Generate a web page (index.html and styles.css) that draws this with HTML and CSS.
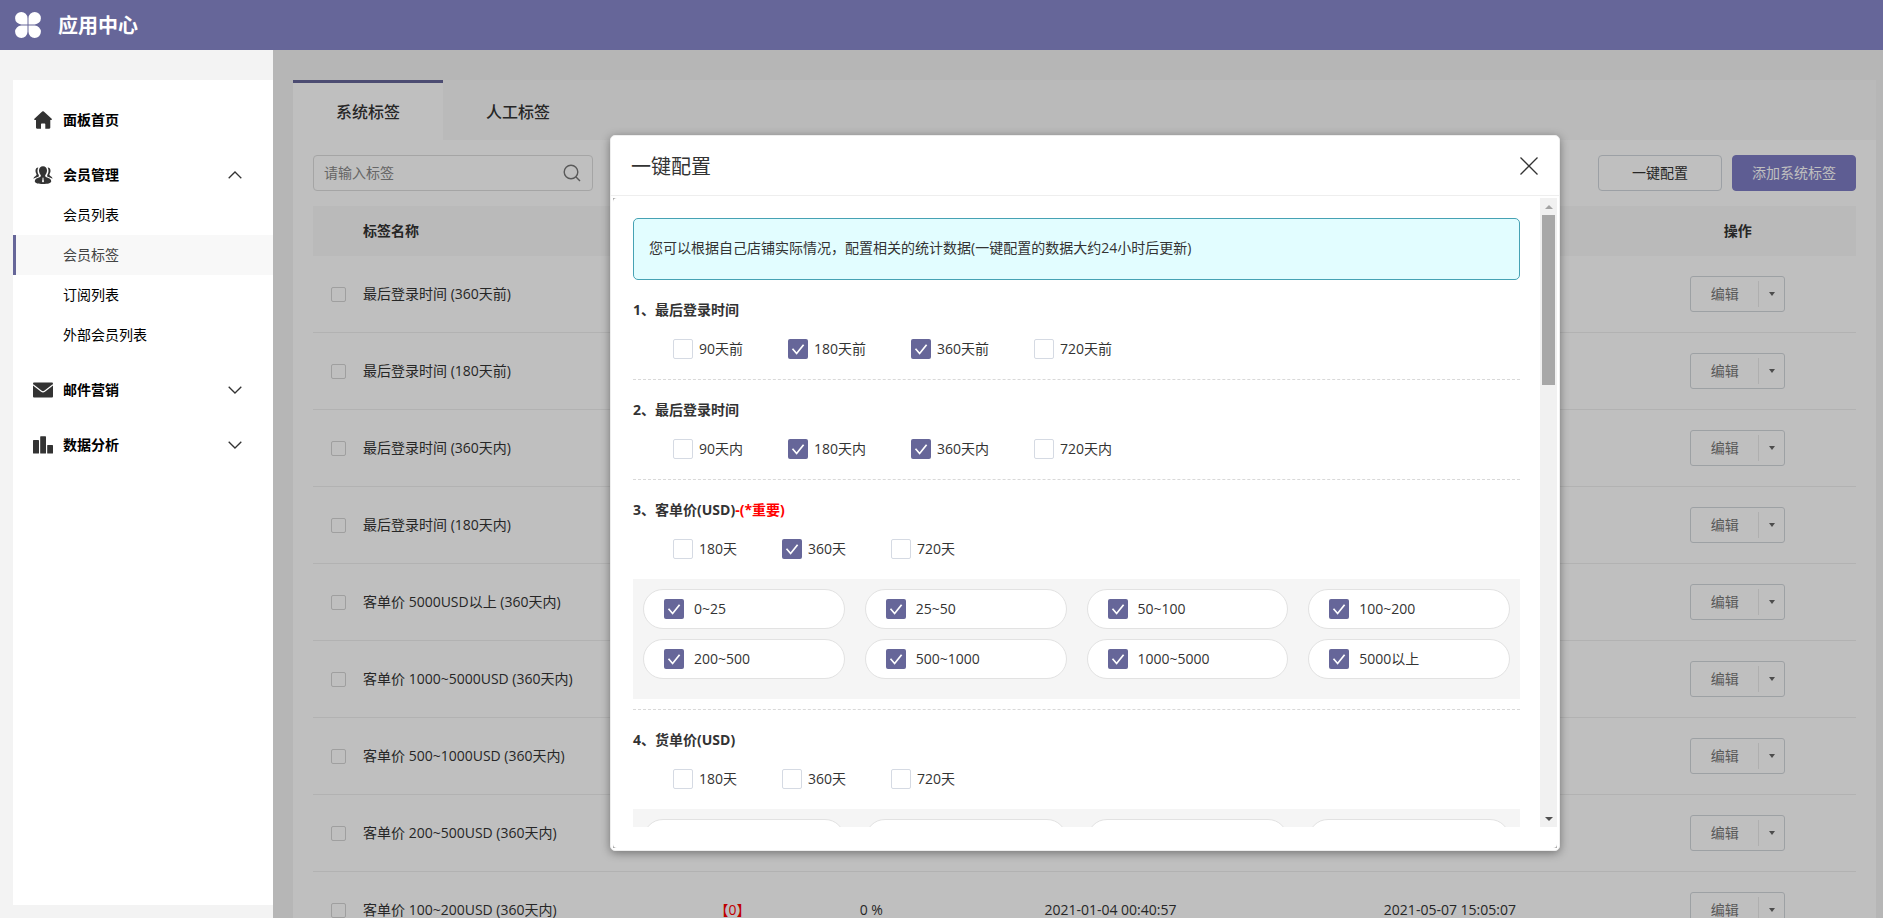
FILE: index.html
```html
<!DOCTYPE html>
<html lang="zh-CN">
<head>
<meta charset="utf-8">
<title>应用中心</title>
<link rel="stylesheet" href="styles.css">
</head>
<body>
<header class="topbar">
  <svg class="topbar-logo" viewBox="0 0 26 26" aria-hidden="true"><g fill="#fff"><path d="M6.3 0A6.2 6.2 0 0 1 12.5 6.2V12.4H6.3A6.2 6.2 0 0 1 6.3 0Z"/><path d="M19.7 0A6.2 6.2 0 0 0 13.5 6.2V12.4H19.7A6.2 6.2 0 0 0 19.7 0Z"/><path d="M6.3 26A6.2 6.2 0 0 0 12.5 19.8V13.6H6.3A6.2 6.2 0 0 0 6.3 26Z"/><path d="M19.7 26A6.2 6.2 0 0 1 13.5 19.8V13.6H19.7A6.2 6.2 0 0 1 19.7 26Z"/></g></svg>
  <h1 class="topbar-title">应用中心</h1>
</header>
<div class="layout">
  <nav class="sidebar">
    <div class="menu">
      <a class="menu-head" href="#home">
        <svg class="menu-icon" viewBox="0 0 20 20" aria-hidden="true"><path fill="#333" d="M10 1.2a1 1 0 0 1 .8.3l7.900 7.300c.5.5.2 1.200-.4 1.200h-1v7.600c0 .7-.4 1.100-1 1.100H12.300v-4.500a.7.7 0 0 0-.7-.7H8.700a.7.7 0 0 0-.7.7v4.500H4c-.6 0-1-.4-1-1.100V10H1.800c-.7 0-.9-.7-.4-1.200l7.800-7.300a1 1 0 0 1 .8-.3Z"/></svg>
        <span class="menu-label">面板首页</span>
      </a>
      <div class="menu-group">
        <a class="menu-head" href="#members">
          <svg class="menu-icon" viewBox="0 0 20 20" aria-hidden="true"><g fill="#333"><path d="M10 1.200c2.500 0 4 1.700 4 4.200 0 1.900-.7 3.500-1.800 4.600v1.300c.4.900 1.700 1.200 3 1.700 2 .7 3 1.600 3 3.600 0 1.700-3.800 2.500-8.200 2.500s-8.200-.8-8.200-2.500c0-2 1-2.900 3-3.600 1.300-.5 2.600-.8 3-1.700V10C6.700 8.900 6 7.300 6 5.400c0-2.500 1.500-4.200 4-4.200Z"/><path d="M5.300 2.400C3.400 2.500 2.300 4 2.500 6c.1 1.400.5 2.300 1 3 .2.900-.3 1.600-1.200 2.200-1 .6-1.700 1.400-1.800 2.600 1.800-.9 3.900-1.300 5.300-2.200V10C4.900 8.700 4.500 7 4.500 5.400c0-1.100.3-2.200.8-3Z"/><path d="M14.700 2.400c1.900.1 3 1.600 2.800 3.600-.1 1.400-.5 2.300-1 3-.2.900.3 1.600 1.200 2.200 1 .6 1.700 1.400 1.800 2.600-1.800-.9-3.900-1.300-5.300-2.200V10c.9-1.300 1.300-3 1.300-4.600 0-1.100-.3-2.200-.8-3Z"/></g><path fill="#fff" d="M9.300 12.800h1.400l-.3 1 .6 2.700-1 1-1-1 .6-2.700Z"/></svg>
          <span class="menu-label">会员管理</span>
          <svg class="menu-arrow" viewBox="0 0 14 8" aria-hidden="true"><path d="M.7 7.300 7 1l6.300 6.300" fill="none" stroke="#333" stroke-width="1.300"/></svg>
        </a>
        <a class="menu-item" href="#member-list">会员列表</a>
        <a class="menu-item active" href="#member-tags">会员标签</a>
        <a class="menu-item" href="#subscriptions">订阅列表</a>
        <a class="menu-item" href="#external">外部会员列表</a>
      </div>
      <a class="menu-head" href="#mail">
        <svg class="menu-icon" viewBox="0 0 20 20" aria-hidden="true"><rect y="2.500" width="20" height="15" rx="1" fill="#333"/><path d="M0 4.800l8.400 6.400a2.600 2.600 0 0 0 3.200 0L20 4.800" fill="none" stroke="#fff" stroke-width="1.200"/></svg>
        <span class="menu-label">邮件营销</span>
        <svg class="menu-arrow" viewBox="0 0 14 8" aria-hidden="true"><path d="M.7.7 7 7 13.300.7" fill="none" stroke="#333" stroke-width="1.300"/></svg>
      </a>
      <a class="menu-head" href="#data">
        <svg class="menu-icon" viewBox="0 0 20 20" aria-hidden="true"><g fill="#333"><rect y="5" width="6" height="13.500" rx=".6"/><rect x="7.200" y="1.200" width="5.800" height="17.300" rx=".6"/><rect x="14.200" y="10" width="5.800" height="8.500" rx=".6"/></g></svg>
        <span class="menu-label">数据分析</span>
        <svg class="menu-arrow" viewBox="0 0 14 8" aria-hidden="true"><path d="M.7.7 7 7 13.300.7" fill="none" stroke="#333" stroke-width="1.300"/></svg>
      </a>
    </div>
  </nav>
  <main class="main">
    <section class="panel">
      <div class="tabs">
        <button class="tab current" type="button">系统标签</button>
        <button class="tab" type="button">人工标签</button>
      </div>
      <div class="toolbar">
        <div class="search">
          <input class="search-input" type="text" placeholder="请输入标签" aria-label="请输入标签">
          <button class="search-button" type="button" aria-label="搜索"><svg class="search-icon" viewBox="0 0 18 18" aria-hidden="true"><g fill="none" stroke="#777" stroke-width="1.400"><circle cx="8" cy="8" r="6.800"/><path d="M12.800 12.800 17 17"/></g></svg></button>
        </div>
        <div class="actions">
          <button class="btn" type="button">一键配置</button>
          <button class="btn primary" type="button">添加系统标签</button>
        </div>
      </div>
      <table class="grid">
        <colgroup><col class="c-check"><col class="c-name"><col class="c-num"><col class="c-num"><col class="c-date"><col class="c-date"><col class="c-op"></colgroup>
        <thead><tr><th></th><th class="name">标签名称</th><th></th><th></th><th></th><th></th><th>操作</th></tr></thead>
        <tbody>
          <tr><td><input class="row-check" type="checkbox" aria-label="最后登录时间 (360天前)"></td><td class="name">最后登录时间 (360天前)</td><td></td><td></td><td></td><td></td><td><div class="split"><button class="split-main" type="button">编辑</button><button class="split-more" type="button" aria-label="更多"></button></div></td></tr>
          <tr><td><input class="row-check" type="checkbox" aria-label="最后登录时间 (180天前)"></td><td class="name">最后登录时间 (180天前)</td><td></td><td></td><td></td><td></td><td><div class="split"><button class="split-main" type="button">编辑</button><button class="split-more" type="button" aria-label="更多"></button></div></td></tr>
          <tr><td><input class="row-check" type="checkbox" aria-label="最后登录时间 (360天内)"></td><td class="name">最后登录时间 (360天内)</td><td></td><td></td><td></td><td></td><td><div class="split"><button class="split-main" type="button">编辑</button><button class="split-more" type="button" aria-label="更多"></button></div></td></tr>
          <tr><td><input class="row-check" type="checkbox" aria-label="最后登录时间 (180天内)"></td><td class="name">最后登录时间 (180天内)</td><td></td><td></td><td></td><td></td><td><div class="split"><button class="split-main" type="button">编辑</button><button class="split-more" type="button" aria-label="更多"></button></div></td></tr>
          <tr><td><input class="row-check" type="checkbox" aria-label="客单价 5000USD以上 (360天内)"></td><td class="name">客单价 5000USD以上 (360天内)</td><td></td><td></td><td></td><td></td><td><div class="split"><button class="split-main" type="button">编辑</button><button class="split-more" type="button" aria-label="更多"></button></div></td></tr>
          <tr><td><input class="row-check" type="checkbox" aria-label="客单价 1000~5000USD (360天内)"></td><td class="name">客单价 1000~5000USD (360天内)</td><td></td><td></td><td></td><td></td><td><div class="split"><button class="split-main" type="button">编辑</button><button class="split-more" type="button" aria-label="更多"></button></div></td></tr>
          <tr><td><input class="row-check" type="checkbox" aria-label="客单价 500~1000USD (360天内)"></td><td class="name">客单价 500~1000USD (360天内)</td><td></td><td></td><td></td><td></td><td><div class="split"><button class="split-main" type="button">编辑</button><button class="split-more" type="button" aria-label="更多"></button></div></td></tr>
          <tr><td><input class="row-check" type="checkbox" aria-label="客单价 200~500USD (360天内)"></td><td class="name">客单价 200~500USD (360天内)</td><td></td><td></td><td></td><td></td><td><div class="split"><button class="split-main" type="button">编辑</button><button class="split-more" type="button" aria-label="更多"></button></div></td></tr>
          <tr><td><input class="row-check" type="checkbox" aria-label="客单价 100~200USD (360天内)"></td><td class="name">客单价 100~200USD (360天内)</td><td><a class="count" href="#count">【0】</a></td><td>0 %</td><td>2021-01-04 00:40:57</td><td>2021-05-07 15:05:07</td><td><div class="split"><button class="split-main" type="button">编辑</button><button class="split-more" type="button" aria-label="更多"></button></div></td></tr>
        </tbody>
      </table>
    </section>
    <div class="overlay">
      <div class="modal" role="dialog" aria-labelledby="modal-title">
        <div class="modal-head">
          <h2 class="modal-title" id="modal-title">一键配置</h2>
          <button class="modal-close" type="button" aria-label="关闭"><svg class="close-icon" viewBox="0 0 18 18" aria-hidden="true"><path d="M.5.5l17 17M17.500.5l-17 17" stroke="#333" stroke-width="1.300"/></svg></button>
        </div>
        <div class="modal-frame">
          <div class="modal-body">
            <div class="scroller">
              <div class="scroll-content">
                <p class="notice">您可以根据自己店铺实际情况，配置相关的统计数据(一键配置的数据大约24小时后更新)</p>
                <section class="group">
                  <h3 class="group-title">1、最后登录时间</h3>
                  <div class="options">
                    <label class="option"><input class="check" type="checkbox">90天前</label>
                    <label class="option"><input class="check" type="checkbox" checked>180天前</label>
                    <label class="option"><input class="check" type="checkbox" checked>360天前</label>
                    <label class="option"><input class="check" type="checkbox">720天前</label>
                  </div>
                </section>
                <section class="group">
                  <h3 class="group-title">2、最后登录时间</h3>
                  <div class="options">
                    <label class="option"><input class="check" type="checkbox">90天内</label>
                    <label class="option"><input class="check" type="checkbox" checked>180天内</label>
                    <label class="option"><input class="check" type="checkbox" checked>360天内</label>
                    <label class="option"><input class="check" type="checkbox">720天内</label>
                  </div>
                </section>
                <section class="group with-ranges">
                  <h3 class="group-title">3、客单价(USD)<span class="important">-(*重要)</span></h3>
                  <div class="options">
                    <label class="option"><input class="check" type="checkbox">180天</label>
                    <label class="option"><input class="check" type="checkbox" checked>360天</label>
                    <label class="option"><input class="check" type="checkbox">720天</label>
                  </div>
                  <div class="ranges">
                    <label class="range"><input class="check" type="checkbox" checked>0~25</label>
                    <label class="range"><input class="check" type="checkbox" checked>25~50</label>
                    <label class="range"><input class="check" type="checkbox" checked>50~100</label>
                    <label class="range"><input class="check" type="checkbox" checked>100~200</label>
                    <label class="range"><input class="check" type="checkbox" checked>200~500</label>
                    <label class="range"><input class="check" type="checkbox" checked>500~1000</label>
                    <label class="range"><input class="check" type="checkbox" checked>1000~5000</label>
                    <label class="range"><input class="check" type="checkbox" checked>5000以上</label>
                  </div>
                </section>
                <section class="group with-ranges">
                  <h3 class="group-title">4、货单价(USD)</h3>
                  <div class="options">
                    <label class="option"><input class="check" type="checkbox">180天</label>
                    <label class="option"><input class="check" type="checkbox">360天</label>
                    <label class="option"><input class="check" type="checkbox">720天</label>
                  </div>
                  <div class="ranges">
                    <div class="range"></div>
                    <div class="range"></div>
                    <div class="range"></div>
                    <div class="range"></div>
                  </div>
                </section>
              </div>
              <div class="scrollbar" aria-hidden="true">
                <span class="arrow up"></span>
                <span class="thumb"></span>
                <span class="arrow down"></span>
              </div>
            </div>
          </div>
        </div>
      </div>
    </div>
  </main>
</div>
</body>
</html>
```
FILE: styles.css
```css
* { box-sizing: border-box; }

body {
  margin: 0;
  height: 100vh;
  display: flex;
  flex-direction: column;
  overflow: hidden;
  background: #f3f3f3;
  color: #333;
  font: 14px/20px "Open Sans", "Noto Sans CJK SC", sans-serif;
}

button, input { font: inherit; color: inherit; }
button { padding: 0; border: 0; background: none; cursor: pointer; }
a { color: inherit; text-decoration: none; }
h1, h2, h3, p { margin: 0; }
svg { display: block; flex: none; }

.topbar {
  flex: none;
  height: 50px;
  display: flex;
  align-items: center;
  gap: 17px;
  padding-left: 15px;
  background: #666699;
  color: #fff;
}
.topbar-logo { width: 26px; height: 26px; }
.topbar-title { padding-top: 2px; font-size: 20px; line-height: 28px; font-weight: 700; }

.layout { flex: 1; min-height: 0; display: flex; }

.sidebar {
  flex: none;
  width: 273px;
  display: flex;
  padding: 30px 0 13px 13px;
}
.menu {
  flex: 1;
  display: flex;
  flex-direction: column;
  gap: 15px;
  padding-top: 20px;
  background: #fff;
  color: #000;
}
.menu-head {
  height: 40px;
  display: flex;
  align-items: center;
  gap: 10px;
  padding: 0 31px 0 20px;
  font-weight: 700;
}
.menu-label { flex: 1; }
.menu-icon { width: 20px; height: 20px; }
.menu-arrow { width: 14px; height: 8px; }
.menu-item {
  display: block;
  padding-left: 47px;
  border-left: 3px solid transparent;
  line-height: 40px;
}
.menu-item.active {
  border-left-color: #666699;
  background: #f8f8f8;
  color: #444;
}

.main {
  position: relative;
  flex: 1;
  min-width: 0;
  overflow: hidden;
  padding: 30px 7px 0 20px;
}
.panel { background: #fff; }
.tabs { display: flex; background: #f9f9f9; }
.tab {
  width: 150px;
  height: 60px;
  border-top: 3px solid transparent;
  font-size: 16px;
  font-weight: 500;
}
.tab.current { border-top-color: #666699; background: #fff; }

.toolbar {
  display: flex;
  justify-content: space-between;
  padding: 15px 20px;
}
.search {
  width: 280px;
  height: 36px;
  display: flex;
  align-items: center;
  padding: 0 11px 0 10px;
  border: 1px solid #ddd;
  border-radius: 4px;
}
.search-input {
  flex: 1;
  min-width: 0;
  padding: 0;
  border: 0;
  outline: 0;
  background: none;
}
.search-input::placeholder { color: #888; opacity: 1; }
.search-icon { width: 18px; height: 18px; }
.actions { display: flex; gap: 10px; }
.btn {
  width: 124px;
  height: 36px;
  border: 1px solid #d0d6dc;
  border-radius: 4px;
}
.btn.primary { border-color: #7e7cc4; background: #7e7cc4; color: #fff; }

.grid {
  width: calc(100% - 40px);
  margin: 0 20px;
  border-collapse: separate;
  border-spacing: 0;
  table-layout: fixed;
  text-align: center;
}
.c-check { width: 50px; }
.c-name { width: 300px; }
.c-num { width: 9%; }
.c-date { width: 22%; }
.grid th { height: 50px; padding: 0; background: #f9f9f9; font-weight: 700; }
.grid td { height: 77px; padding: 0; border-bottom: 1px solid #eee; }
.grid .name { text-align: left; }
.count { color: #f00; }
.row-check {
  appearance: none;
  display: block;
  width: 15px;
  height: 15px;
  margin: 0 0 0 18px;
  border: 1px solid #d4d4d4;
  border-radius: 2px;
}
.split {
  width: 95px;
  height: 36px;
  display: flex;
  align-items: center;
  margin: 0 auto;
  border: 1px solid #d2d7db;
  border-radius: 3px;
  color: #777;
}
.split-main { flex: 1; height: 34px; }
.split-more {
  width: 26px;
  height: 26px;
  display: flex;
  align-items: center;
  justify-content: center;
  border-left: 1px solid #eaeaea;
}
.split-more::after {
  content: "";
  border: 3px solid transparent;
  border-top: 4px solid #666;
  border-bottom: 0;
}

.overlay {
  position: absolute;
  inset: 0;
  display: flex;
  justify-content: center;
  padding: 85px 0 67px 14px;
  background: rgba(0, 0, 0, .25);
}
.modal {
  width: 950px;
  display: flex;
  flex-direction: column;
  border: 1px solid #eee;
  border-radius: 5px;
  background: #fff;
  box-shadow: 0 2px 10px rgba(0, 0, 0, .4);
}
.modal-head {
  flex: none;
  height: 60px;
  display: flex;
  align-items: center;
  justify-content: space-between;
  padding: 0 21px 0 20px;
  border-bottom: 1px solid #eee;
}
.modal-title { padding-top: 2px; font-size: 20px; line-height: 30px; font-weight: 400; }
.close-icon { width: 18px; height: 18px; }
.modal-frame {
  flex: 1;
  min-height: 0;
  display: flex;
  margin: 2px;
  background: #aaa;
}
.modal-body {
  flex: 1;
  min-width: 0;
  display: flex;
  padding-bottom: 21px;
  border-radius: 4px 0 4px 4px;
  background: #fff;
}
.scroller { flex: 1; min-width: 0; display: flex; overflow: hidden; }
.scroll-content { flex: 1; min-width: 0; padding: 20px 20px 0; }

.scrollbar {
  flex: none;
  width: 17px;
  display: flex;
  flex-direction: column;
  background: #f1f1f1;
}
.arrow {
  height: 17px;
  display: flex;
  align-items: center;
  justify-content: center;
}
.arrow::after { content: ""; border: 4px solid transparent; }
.arrow.up::after { border-top: 0; border-bottom-color: #a3a3a3; }
.arrow.down { margin-top: auto; }
.arrow.down::after { border-bottom: 0; border-top-color: #505050; }
.thumb { height: 27%; margin: 0 2px; background: #a8a8a8; }

.notice {
  padding: 19px 15px 21px;
  border: 1px solid #46a2b4;
  border-radius: 5px;
  background: #e2fdff;
}
.group { padding: 20px 0; border-bottom: 1px dashed #d9d9d9; }
.group.with-ranges { padding-bottom: 10px; }
.group-title { font-size: 14px; line-height: 20px; font-weight: 700; }
.important { color: #f00; }
.options { display: flex; gap: 45px; margin-top: 19px; padding-left: 40px; }
.option { display: flex; align-items: center; gap: 6px; }
.check {
  appearance: none;
  flex: none;
  width: 20px;
  height: 20px;
  margin: 0;
  border: 1px solid #d5dae3;
  border-radius: 2px;
  background: #fff;
}
.check:checked {
  border: 0;
  background: #666699 url("data:image/svg+xml,%3Csvg xmlns='http://www.w3.org/2000/svg' viewBox='0 0 20 20'%3E%3Cpath d='M4.500 9.800l4.100 4.700 7-8.700' fill='none' stroke='%23fff' stroke-width='1.700'/%3E%3C/svg%3E");
}
.ranges {
  display: grid;
  grid-template-columns: repeat(4, 1fr);
  gap: 10px 20px;
  margin-top: 20px;
  padding: 10px 10px 20px;
  background: #f5f5f5;
}
.range {
  height: 40px;
  display: flex;
  align-items: center;
  gap: 10px;
  padding-left: 20px;
  border: 1px solid #e2e2e2;
  border-radius: 20px;
  background: #fff;
}
```
